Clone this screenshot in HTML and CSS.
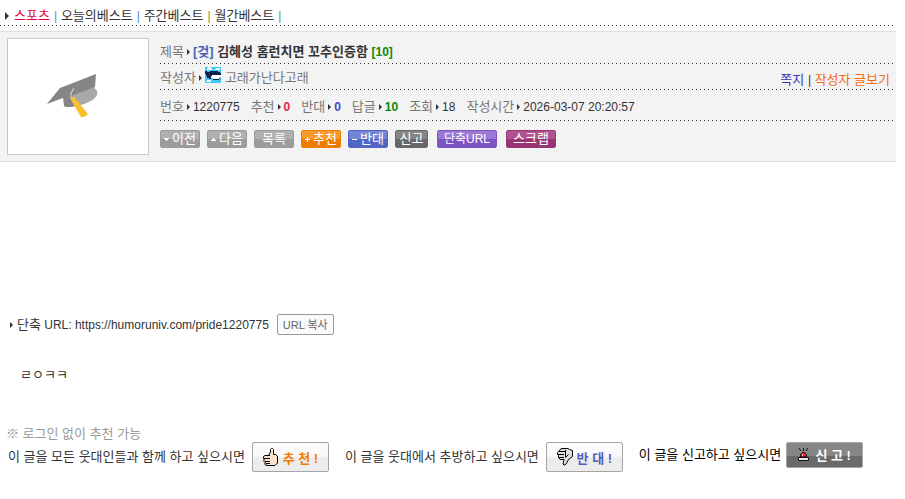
FILE: index.html
```html
<!DOCTYPE html>
<html lang="ko">
<head>
    <meta charset="UTF-8">
    <meta name="viewport" content="width=device-width, initial-scale=1.0">
    <title>김혜성 홈런치면 꼬추인증함</title>
    <link rel="stylesheet" href="styles.css">
</head>
<body>
    <nav class="board-nav">
        <span class="arrow big"></span>
        <a href="#" class="current">스포츠</a>
        <span class="bar blue">|</span>
        <a href="#">오늘의베스트</a>
        <span class="bar blue">|</span>
        <a href="#">주간베스트</a>
        <span class="bar green">|</span>
        <a href="#">월간베스트</a>
        <span class="bar green">|</span>
    </nav>
    <div class="dots"></div>

    <header class="post-head">
        <div class="thumb">
            <svg width="62" height="48" viewBox="0 0 62 48">
                <path d="M17 24 L18 34 Q33 34 44 28 Q52 23 50 18 L46 13 Z" fill="#a9a9a9"/>
                <path d="M16 24 L17 33 Q21 35 28 33 L25 20 Z" fill="#858585"/>
                <path d="M0 31 L13 15 L49 1 L48 14 L24 23 L16 25 Z" fill="#858585"/>
                <path d="M27 15 L24 20 L24 26" fill="none" stroke="#ddd" stroke-width="1"/>
                <path d="M24 25 Q26 22 28 25 L41 41 Q38 45 34 44 L24 27 Z" fill="#fbc02d"/>
            </svg>
        </div>

        <div class="post-info">
            <div class="row">
                <span class="label">제목</span><span class="arrow"></span>
                <h1><span class="tag">[겆]</span> 김혜성 홈런치면 꼬추인증함 <span class="count">[10]</span></h1>
            </div>
            <div class="dots"></div>

            <div class="row">
                <span class="label">작성자</span><span class="arrow"></span>
                <svg class="avatar" width="16" height="16" viewBox="0 0 16 16" shape-rendering="crispEdges">
                    <rect width="16" height="16" fill="#45c8f8"/>
                    <path d="M3 0h3v1h1v2H2V1h1zM11 1h4v2h-5V2h1zM2 13h4v2H1v-1h1z" fill="#e4f8ff"/>
                    <path d="M0 4h2v1h3v-1h8v1h2v1h1v3H6v3H4v-1H2V9H1V7H0z" fill="#10224c"/>
                    <path d="M7 8h9v2h-1v1h-1v1H8v-1H6V9h1z" fill="#fff"/>
                    <path d="M8 12h6v1H8zM14 11h1v1h-1z" fill="#10224c"/>
                </svg>
                <span class="label">고래가난다고래</span>
                <div class="author-links">
                    <a href="#" class="memo">쪽지</a> <span class="bar">|</span> <a href="#" class="posts">작성자 글보기</a>
                </div>
            </div>
            <div class="dots"></div>

            <dl class="stats">
                <div><dt>번호</dt><dd>1220775</dd></div>
                <div><dt>추천</dt><dd class="red">0</dd></div>
                <div><dt>반대</dt><dd class="blue">0</dd></div>
                <div><dt>답글</dt><dd class="green">10</dd></div>
                <div><dt>조회</dt><dd>18</dd></div>
                <div><dt>작성시간</dt><dd>2026-03-07 20:20:57</dd></div>
            </dl>
            <div class="dots"></div>

            <div class="tools">
                <button type="button" class="btn"><svg width="5" height="3" viewBox="0 0 5 3"><path d="M0 0h5v1H4v1H3v1H2V2H1V1H0z" fill="#fff"/></svg>이전</button>
                <button type="button" class="btn"><svg width="5" height="3" viewBox="0 0 5 3"><path d="M2 0h1v1h1v1h1v1H0V2h1V1h1z" fill="#fff"/></svg>다음</button>
                <button type="button" class="btn">목록</button>
                <button type="button" class="btn orange"><svg width="5" height="5" viewBox="0 0 5 5"><path d="M2 0h1v2h2v1H3v2H2V3H0V2h2z" fill="#fff"/></svg>추천</button>
                <button type="button" class="btn indigo"><svg width="5" height="5" viewBox="0 0 5 5"><path d="M0 2h5v1H0z" fill="#fff"/></svg>반대</button>
                <button type="button" class="btn dark">신고</button>
                <button type="button" class="btn purple">단축URL</button>
                <button type="button" class="btn magenta">스크랩</button>
            </div>
        </div>
    </header>

    <main class="post-body">
        <div class="short-url">
            <span class="arrow"></span>
            <span><span class="ko">단축</span> URL: https://humoruniv.com/pride1220775</span>
            <button type="button" class="copy-btn">URL 복사</button>
        </div>
        <p class="content">ㄹㅇㅋㅋ</p>
    </main>

    <footer class="vote">
        <p class="notice">※ 로그인 없이 추천 가능</p>
        <div class="vote-row">
            <div class="vote-item">
                <span>이 글을 모든 웃대인들과 함께 하고 싶으시면</span>
                <button type="button" class="vote-btn up">
                    <svg width="16" height="18" viewBox="0 0 16 18">
                        <path d="M5.500 7.500L7.500 4V1.500l1-1h1l1 1V6.500h2l2 1.500v7l-2.500 2.500H4L2 16.500v-2l-1-1v-2l-.5-1V8.500l1.500-1z" fill="#fde4c8" stroke="#000"/>
                        <path d="M1 10.500h6M2 13.500h5M3 15.500h4M5 7.500h2" stroke="#000" fill="none"/>
                    </svg>
                    추 천 !
                </button>
            </div>
            <div class="vote-item">
                <span>이 글을 웃대에서 추방하고 싶으시면</span>
                <button type="button" class="vote-btn down">
                    <svg width="16" height="18" viewBox="0 0 16 18">
                        <path d="M3 1.500L5 .5h6l1.500 1 3 1v6l-4 3-1.500 3-2 2.500H7l-1-1 1-4.500H3l-1.500-2v-2l-1-1v-2l1-1z" fill="#ddd" stroke="#000"/>
                        <path d="M2 3.500h6M1 6.500h6M2 9.500h5M8.500 2v7M11.500 6.500l-3 3" stroke="#000" fill="none"/>
                    </svg>
                    반 대 !
                </button>
            </div>
            <div class="vote-item report">
                <span>이 글을 신고하고 싶으시면</span>
                <button type="button" class="vote-btn siren">
                    <svg width="11" height="13" viewBox="0 0 11 13">
                        <path d="M1 0l2 3M5.500 0v3M10 0L8 3" stroke="#111" fill="none"/>
                        <path d="M2.500 9V6.500l2-2h2l2 2V9z" fill="#e8213c" stroke="#111"/>
                        <path d="M4 6h1v2H4z" fill="#ffb0b8"/>
                        <path d="M.5 9.500h10v3H.5z" fill="#e6e6e6" stroke="#111"/>
                    </svg>
                    신 고 !
                </button>
            </div>
        </div>
    </footer>
</body>
</html>
```
FILE: styles.css
```css
* {
    box-sizing: border-box;
}

body {
    margin: 0;
    padding-right: 9px;
    background: #fff;
    color: #333;
    font-family: "Liberation Sans", "Noto Sans CJK KR", sans-serif;
    font-size: 13px;
    line-height: 18px;
}

a {
    color: inherit;
    text-decoration: none;
}

h1, p, dl, dd {
    margin: 0;
}

button {
    font-family: inherit;
    cursor: pointer;
}

.dots {
    height: 1px;
    margin-right: 2px;
    background: repeating-linear-gradient(90deg, #333 0, #333 1px, transparent 1px, transparent 4px);
}

.arrow {
    flex: none;
    margin: 0 3px;
    border-left: 3px solid #333;
    border-top: 3px solid transparent;
    border-bottom: 3px solid transparent;
}

.arrow.big {
    margin: 0 1px 0 5px;
    border-width: 4px 0 4px 4px;
}

/* 게시판 메뉴 */
.board-nav {
    display: flex;
    align-items: center;
    gap: 4px;
    height: 25px;
    padding-top: 6px;
}

.board-nav .current {
    color: #e6003e;
}

.bar {
    font-size: 12px;
}

.board-nav .bar {
    width: 3px;
}

.bar.blue {
    color: #4a90c8;
}

.bar.green {
    color: #5a9a3a;
}

/* 글 정보 */
.post-head {
    display: flex;
    gap: 11px;
    margin-top: 5px;
    padding: 6px 0 6px 7px;
    background: #f3f3f3;
    border-top: 1px solid #e1e1e1;
    border-bottom: 1px solid #e1e1e1;
}

.thumb {
    display: flex;
    align-items: center;
    justify-content: center;
    flex: none;
    width: 142px;
    height: 117px;
    background: #fff;
    border: 1px solid #c8c8c8;
}

.post-info {
    flex: 1;
}

.row {
    display: flex;
    align-items: center;
    height: 25px;
    padding-top: 2px;
}

.label, dt {
    color: #777;
}

h1 {
    font-size: 13px;
    line-height: 18px;
}

.tag {
    color: #4a62b5;
}

.count {
    color: #0a8a0a;
    font-size: 12px;
}

.avatar {
    margin: 0 4px 6px 0;
}

.author-links {
    margin: 4px 6px 0 auto;
}

.memo {
    color: #3a36c0;
}

.posts {
    color: #f26a10;
}

.stats {
    display: flex;
    align-items: center;
    gap: 11px;
    height: 30px;
    padding-top: 4px;
}

.stats div {
    display: flex;
    align-items: center;
}

.stats dt::after {
    content: "";
    display: inline-block;
    margin: 0 3px;
    border-left: 3px solid #333;
    border-top: 3px solid transparent;
    border-bottom: 3px solid transparent;
    vertical-align: 1px;
}

.stats dd {
    font-size: 12px;
}

.stats .red, .stats .blue, .stats .green {
    font-weight: bold;
}

.stats .red {
    color: #e8204c;
}

.stats .blue {
    color: #4a48d0;
}

.stats .green {
    color: #0a8a0a;
}

.tools {
    display: flex;
    gap: 7px;
    padding-top: 9px;
}

.btn {
    display: flex;
    align-items: center;
    justify-content: center;
    gap: 3px;
    min-width: 40px;
    height: 18px;
    padding: 0 3px;
    color: #fff;
    font-size: 13px;
    line-height: 16px;
    border: 1px solid #999;
    border-radius: 2px;
    background: linear-gradient(#b0b0b0 50%, #9c9c9c 50%);
}

.btn.orange {
    border-color: #ee7c00;
    background: linear-gradient(#f79a2c 50%, #ee7c00 50%);
}

.btn.indigo {
    border-color: #5264c4;
    background: linear-gradient(#7484d6 50%, #5264c4 50%);
}

.btn.dark {
    min-width: 33px;
    border-color: #686868;
    background: linear-gradient(#868686 50%, #686868 50%);
}

.btn.purple {
    min-width: 60px;
    margin: 0 2px;
    font-size: 12px;
    border-color: #7d54c2;
    background: linear-gradient(#9a78d6 50%, #7d54c2 50%);
}

.btn.magenta {
    min-width: 50px;
    border-color: #983474;
    background: linear-gradient(#b05290 50%, #983474 50%);
}

/* 본문 */
.post-body {
    padding: 152px 7px 0;
}

.short-url {
    display: flex;
    align-items: center;
    font-size: 12px;
}

.short-url .arrow {
    margin-right: 4px;
}

.ko {
    font-size: 13px;
}

.copy-btn {
    height: 21px;
    margin-left: 8px;
    padding: 0 5px 2px;
    color: #666;
    font-size: 11px;
    background: #fafafa;
    border: 1px solid #999;
    border-radius: 2px;
}

.content {
    padding: 31px 13px 0;
}

/* 추천, 반대, 신고 */
.vote {
    padding: 42px 6px 0;
}

.notice {
    color: #999;
    line-height: 16px;
}

.vote-row {
    display: flex;
    flex-wrap: wrap;
    align-items: flex-start;
    gap: 16px;
    padding-left: 2px;
}

.vote-item {
    display: flex;
    align-items: center;
    gap: 7px;
}

.vote-item.report {
    gap: 5px;
    color: #000;
}

.vote-btn {
    display: flex;
    align-items: center;
    justify-content: center;
    gap: 4px;
    width: 77px;
    height: 30px;
    padding: 0;
    font-size: 13px;
    font-weight: bold;
    border: 1px solid #a5a5a5;
    border-radius: 2px;
    background: linear-gradient(#fafafa 45%, #ececec 55%);
}

.vote-btn.up {
    color: #f07c00;
}

.vote-btn.down {
    color: #4e62c4;
}

.vote-btn.siren {
    gap: 6px;
    height: 26px;
    padding-bottom: 2px;
    color: #fff;
    background: linear-gradient(#868686 54%, #6a6a6a 54%);
}
```
